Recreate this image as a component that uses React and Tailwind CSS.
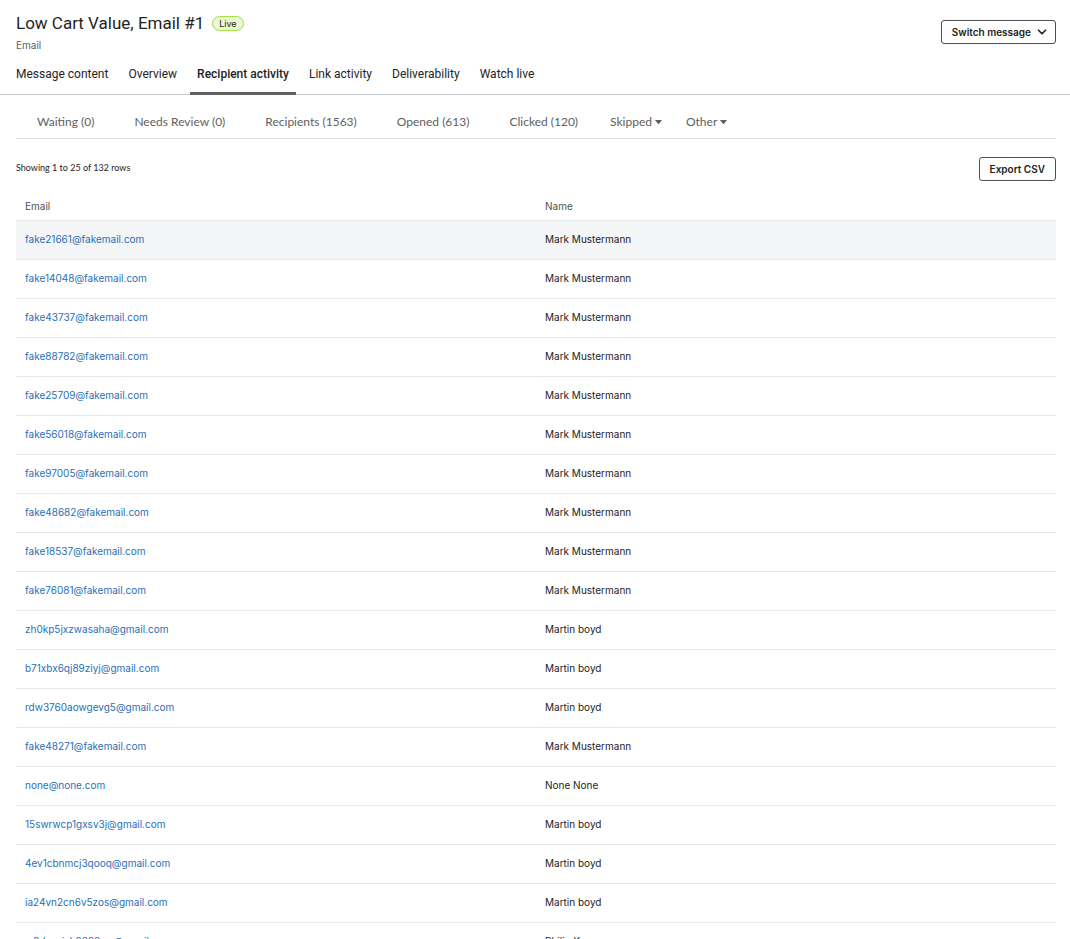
import clsx from 'clsx'
import { ChevronDown } from 'lucide-react'

const tabs = ['Message content', 'Overview', 'Recipient activity', 'Link activity', 'Deliverability', 'Watch live']
const activeTab = 'Recipient activity'

const filters = ['Waiting (0)', 'Needs Review (0)', 'Recipients (1563)', 'Opened (613)', 'Clicked (120)']
const menus = ['Skipped', 'Other']

const recipients = [
  { email: 'fake21661@fakemail.com', name: 'Mark Mustermann' },
  { email: 'fake14048@fakemail.com', name: 'Mark Mustermann' },
  { email: 'fake43737@fakemail.com', name: 'Mark Mustermann' },
  { email: 'fake88782@fakemail.com', name: 'Mark Mustermann' },
  { email: 'fake25709@fakemail.com', name: 'Mark Mustermann' },
  { email: 'fake56018@fakemail.com', name: 'Mark Mustermann' },
  { email: 'fake97005@fakemail.com', name: 'Mark Mustermann' },
  { email: 'fake48682@fakemail.com', name: 'Mark Mustermann' },
  { email: 'fake18537@fakemail.com', name: 'Mark Mustermann' },
  { email: 'fake76081@fakemail.com', name: 'Mark Mustermann' },
  { email: 'zh0kp5jxzwasaha@gmail.com', name: 'Martin boyd' },
  { email: 'b71xbx6qj89ziyj@gmail.com', name: 'Martin boyd' },
  { email: 'rdw3760aowgevg5@gmail.com', name: 'Martin boyd' },
  { email: 'fake48271@fakemail.com', name: 'Mark Mustermann' },
  { email: 'none@none.com', name: 'None None' },
  { email: '15swrwcp1gxsv3j@gmail.com', name: 'Martin boyd' },
  { email: '4ev1cbnmcj3qooq@gmail.com', name: 'Martin boyd' },
  { email: 'ia24vn2cn6v5zos@gmail.com', name: 'Martin boyd' },
  { email: 'w2dvxxjsh2888xw@gmail.com', name: 'Philip Kwon' },
]

const Header = () => (
  <header className="border-b border-[#c1c7cd]">
    <div className="flex items-start justify-between px-4 pt-3 pr-3.5">
      <div>
        <div className="flex items-center gap-2">
          <h1 className="font-[Roboto] text-[17px] leading-[22px] font-normal">Low Cart Value, Email #1</h1>
          <span className="rounded-full border border-[#a3e048] bg-[#e8f8d0] px-1.5 text-[9px] leading-[13px]">Live</span>
        </div>
        <p className="mt-[3px] text-[10px] leading-4 text-[#606060]">Email</p>
      </div>
      <button
        type="button"
        className="mt-2 flex h-6 items-center gap-1 rounded-[3px] border border-[#505050] pr-1.5 pl-2.5 text-[10px] font-semibold"
      >
        Switch message
        <ChevronDown size={14} strokeWidth={3} />
      </button>
    </div>

    <nav className="mt-1 flex gap-1.5 px-[9px] font-[Roboto] text-[12px] leading-4">
      {tabs.map((tab) => (
        <a
          key={tab}
          href="#"
          className={clsx(
            '-mb-px px-[7px] pt-[9px]',
            tab === activeTab ? 'border-b-3 border-[#606060] pb-2.5 font-medium' : 'pb-3'
          )}
        >
          {tab}
        </a>
      ))}
    </nav>
  </header>
)

const Filters = () => (
  <nav className="flex items-center gap-10 border-b border-[#dddddd] px-[21px] pt-[18px] pb-2 font-[Lato] text-[12px] leading-[17px] text-[#606060]">
    {filters.map((filter) => (
      <a key={filter} href="#">{filter}</a>
    ))}
    <div className="-ml-2 flex gap-6">
      {menus.map((menu) => (
        <button key={menu} type="button" className="flex items-center gap-[3px]">
          {menu}
          <svg width="7" height="4" viewBox="0 0 7 4" fill="currentColor">
            <path d="M0.5 0h6q.5 0 .2.4L4 3.7q-.5.5-1 0L.3.4Q0 0 .5 0z" />
          </svg>
        </button>
      ))}
    </div>
  </nav>
)

const App = () => {
  return (
    <div className="min-h-screen bg-white font-[Inter,sans-serif] text-[#232323]">
      <Header />

      <main className="pr-3.5 pl-4">
        <Filters />

        <div className="mt-[18px] flex items-start justify-between">
          <p className="pt-1 font-[Lato] text-[9px] leading-[14px]">Showing 1 to 25 of 132 rows</p>
          <button
            type="button"
            className="h-6 rounded-[3px] border border-[#505050] px-2.5 text-[10px] font-semibold"
          >
            Export CSV
          </button>
        </div>

        <table className="mt-[11px] w-full table-fixed border-collapse text-left text-[10px] leading-4">
          <thead>
            <tr className="h-7 border-b border-[#e8e8e8] text-[#505050]">
              <th className="px-[9px] font-normal">Email</th>
              <th className="px-[9px] font-normal">Name</th>
            </tr>
          </thead>
          <tbody>
            {recipients.map((person) => (
              <tr key={person.email} className="h-[39px] border-b border-[#e8e8e8] first:bg-[#f4f5f7]">
                <td className="px-[9px] pb-0.5">
                  <a href="#" className="text-[#2a6fb5]">{person.email}</a>
                </td>
                <td className="px-[9px] pb-0.5">{person.name}</td>
              </tr>
            ))}
          </tbody>
        </table>
      </main>
    </div>
  )
}

export default App
